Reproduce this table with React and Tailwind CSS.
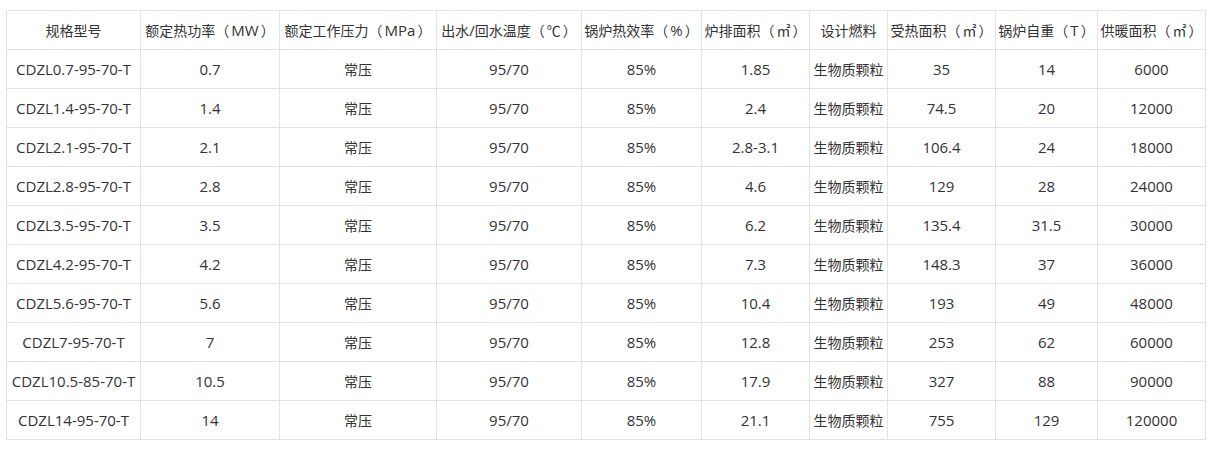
import React from "react";

// [chinese label, unit inside the full-width brackets]
const headers = [
  ["规格型号", null],
  ["额定热功率", "MW"],
  ["额定工作压力", "MPa"],
  ["出水/回水温度", "℃"],
  ["锅炉热效率", "%"],
  ["炉排面积", "㎡"],
  ["设计燃料", null],
  ["受热面积", "㎡"],
  ["锅炉自重", "T"],
  ["供暖面积", "㎡"],
];

const widths = [134, 139, 157, 145, 120, 108, 78, 108, 102, 108];

const rows = [
  ["CDZL0.7-95-70-T", "0.7", "1.85", "35", "14", "6000"],
  ["CDZL1.4-95-70-T", "1.4", "2.4", "74.5", "20", "12000"],
  ["CDZL2.1-95-70-T", "2.1", "2.8-3.1", "106.4", "24", "18000"],
  ["CDZL2.8-95-70-T", "2.8", "4.6", "129", "28", "24000"],
  ["CDZL3.5-95-70-T", "3.5", "6.2", "135.4", "31.5", "30000"],
  ["CDZL4.2-95-70-T", "4.2", "7.3", "148.3", "37", "36000"],
  ["CDZL5.6-95-70-T", "5.6", "10.4", "193", "49", "48000"],
  ["CDZL7-95-70-T", "7", "12.8", "253", "62", "60000"],
  ["CDZL10.5-85-70-T", "10.5", "17.9", "327", "88", "90000"],
  ["CDZL14-95-70-T", "14", "21.1", "755", "129", "120000"],
];

const cell = "h-[39px] border border-[#e3e3e3] p-0 text-center align-middle whitespace-nowrap";
const Zh = ({ children }) => <span className="text-[14px]">{children}</span>;

export default function App() {
  return (
    <div
      className="min-h-screen bg-white pl-[6px] pt-[10px] text-[15px] text-[#333]"
      style={{ fontFamily: '"Open Sans", "Noto Sans CJK SC", sans-serif' }}
    >
      <table className="table-fixed border-collapse w-[1200px]">
        <colgroup>
          {widths.map((w, i) => (
            <col key={i} style={{ width: w }} />
          ))}
        </colgroup>
        <thead>
          <tr>
            {headers.map(([label, unit]) => (
              <th key={label} className={`${cell} font-normal`}>
                {label.includes("/") ? (
                  <>
                    <Zh>出水</Zh>/<Zh>回水温度</Zh>
                  </>
                ) : (
                  <Zh>{label}</Zh>
                )}
                {unit && (
                  <>
                    <span className="inline-block w-[14px] text-right text-[14px]">（</span>
                    <span className="px-[2px]">
                      {unit === "㎡" || unit === "℃" ? <Zh>{unit}</Zh> : unit}
                    </span>
                    <span className="inline-block w-[14px] text-left text-[14px]">）</span>
                  </>
                )}
              </th>
            ))}
          </tr>
        </thead>
        <tbody>
          {rows.map(([model, power, grate, heat, weight, area]) => (
            <tr key={model}>
              <td className={cell}>{model}</td>
              <td className={cell}>{power}</td>
              <td className={cell}>
                <Zh>常压</Zh>
              </td>
              <td className={cell}>95/70</td>
              <td className={cell}>85%</td>
              <td className={cell}>{grate}</td>
              <td className={cell}>
                <Zh>生物质颗粒</Zh>
              </td>
              <td className={cell}>{heat}</td>
              <td className={cell}>{weight}</td>
              <td className={cell}>{area}</td>
            </tr>
          ))}
        </tbody>
      </table>
    </div>
  );
}
